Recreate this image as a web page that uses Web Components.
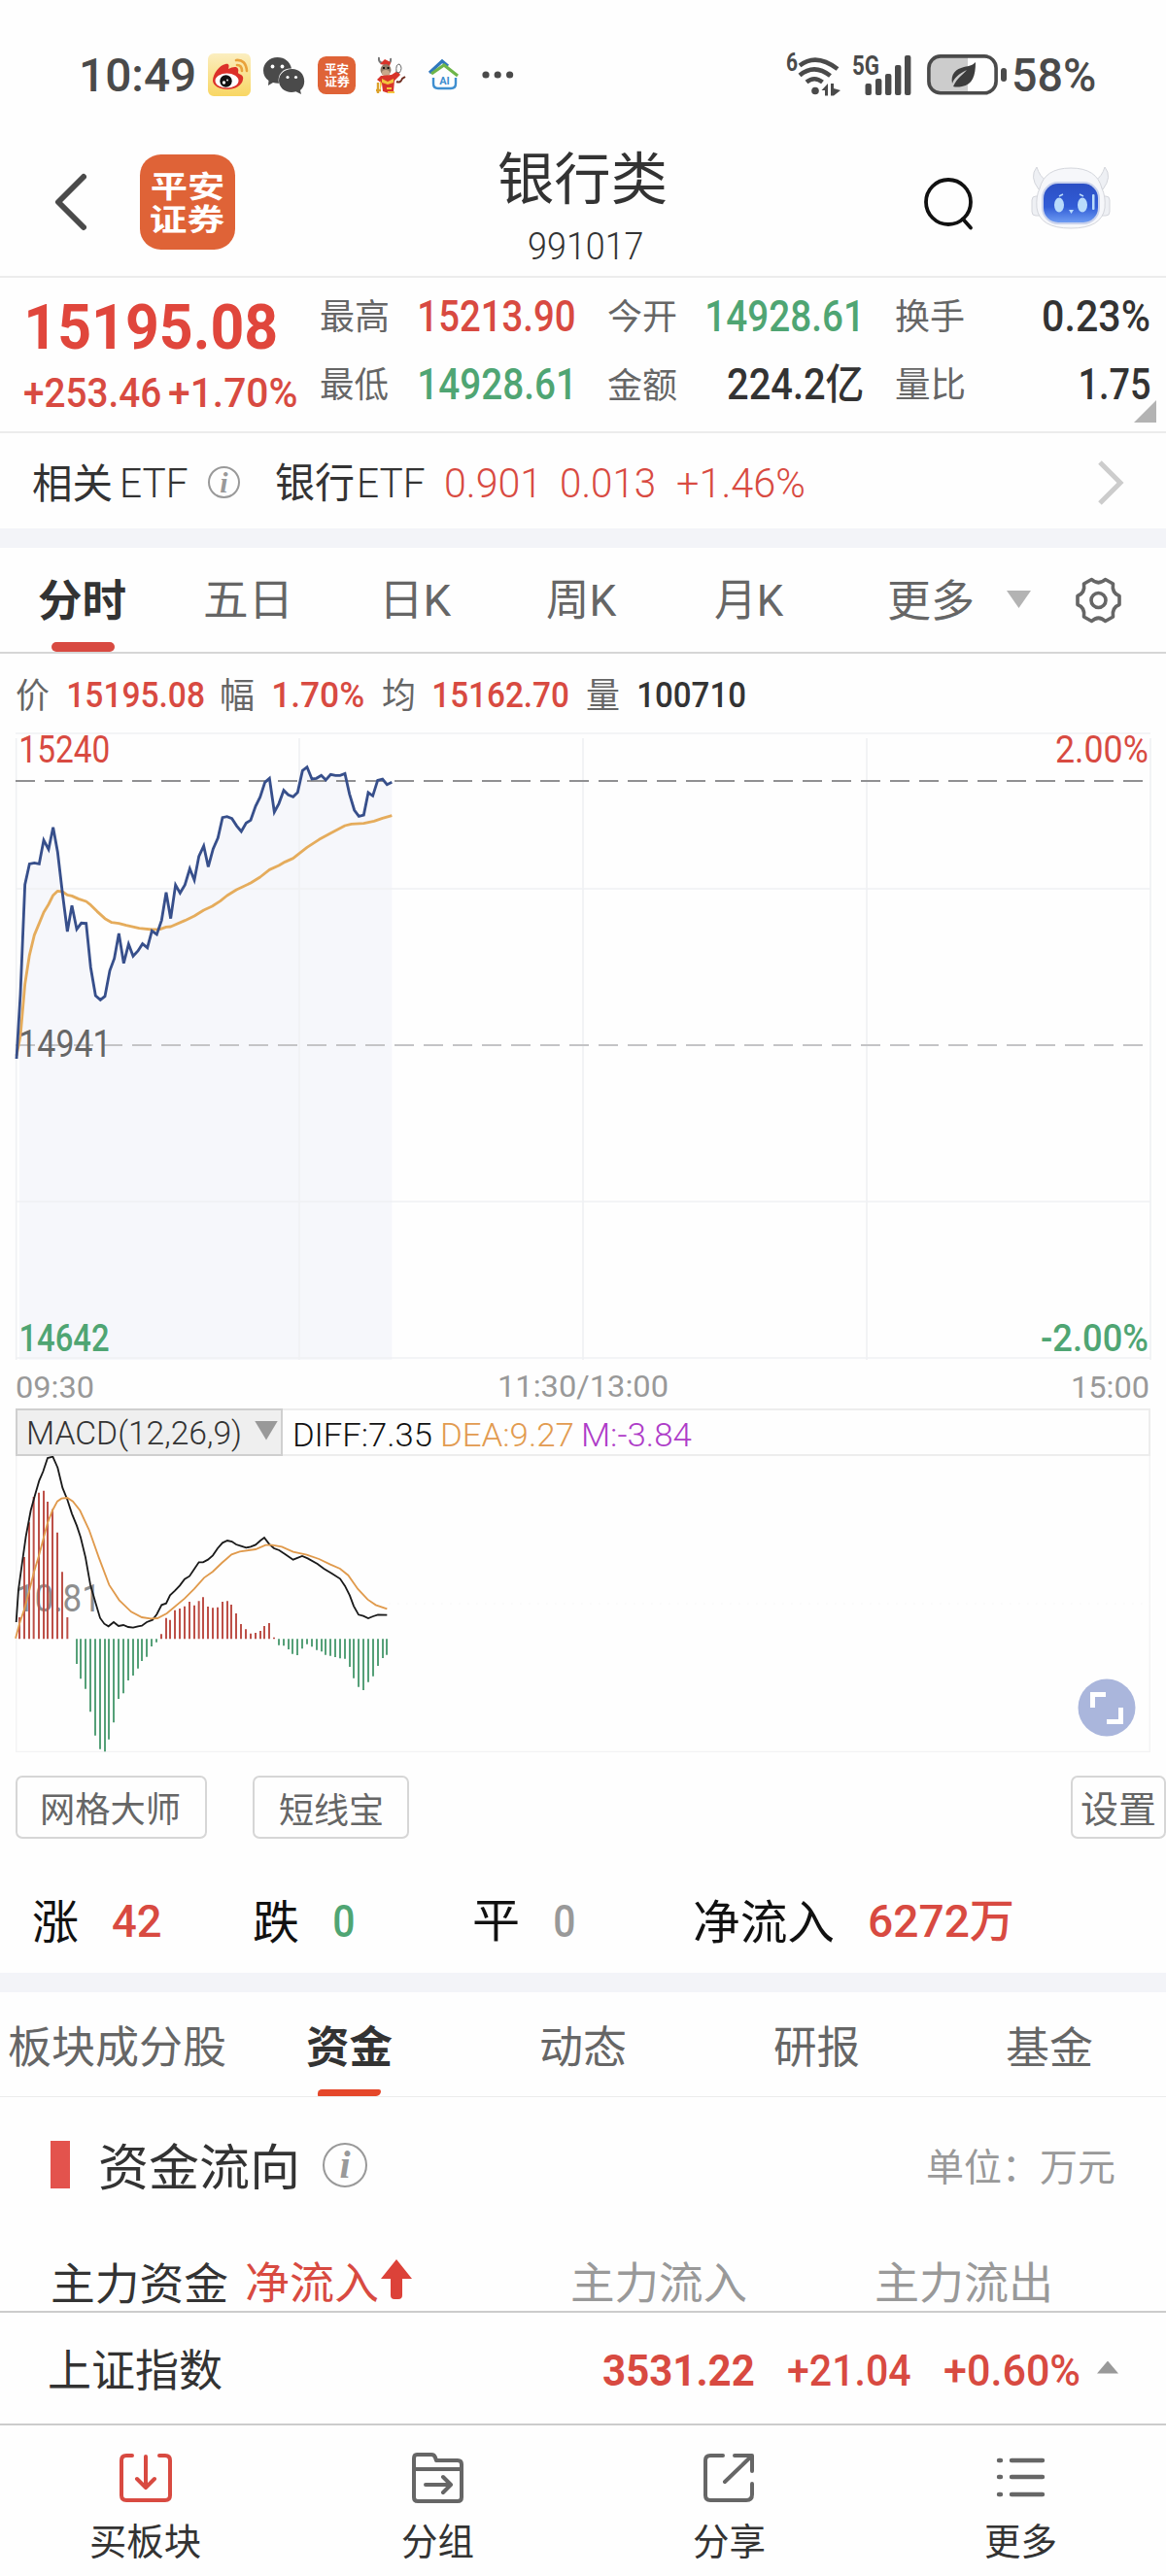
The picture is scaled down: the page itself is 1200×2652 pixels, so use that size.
<!DOCTYPE html>
<html lang="zh-CN">
<head>
<meta charset="UTF-8">
<title>银行类 991017</title>
<style>
    body {
        margin: 0;
        width: 1200px;
        background: #fefefe;
        color: #333;
        font-family: Roboto, "Noto Sans CJK SC", sans-serif;
        --red: #d84a41;
        --green: #4fa573;
        --gray: #666;
        --light: #999;
    }
</style>
</head>
<body>
    <status-bar></status-bar>
    <page-header></page-header>
    <quote-panel></quote-panel>
    <etf-row></etf-row>
    <section-gap></section-gap>
    <period-tabs></period-tabs>
    <price-info></price-info>
    <price-chart></price-chart>
    <macd-chart></macd-chart>
    <tool-buttons></tool-buttons>
    <rise-fall></rise-fall>
    <section-gap></section-gap>
    <detail-tabs></detail-tabs>
    <fund-flow></fund-flow>
    <index-row></index-row>
    <bottom-nav>
        <nav-item label="买板块" w="112">
            <svg width="54" height="54" viewBox="0 0 54 54" fill="none" stroke="#d84a41" stroke-width="4" stroke-linecap="round" stroke-linejoin="round"><path d="M13 5H7q-5 0-5 5v36q0 5 5 5h40q5 0 5-5V10q0-5-5-5h-6M27 6v32M18 29l9 9 9-9"/></svg>
        </nav-item>
        <nav-item label="分组" w="73">
            <svg width="54" height="54" viewBox="0 0 54 54" fill="none" stroke="#666" stroke-width="4" stroke-linecap="round" stroke-linejoin="round"><path d="M3 19h49M6 4h15q3 0 4 3l1 3h22q4 0 4 4v34q0 4-4 4H7q-4 0-4-4V8q0-4 3-4zM15 35h25M33 27l8 8-8 8"/></svg>
        </nav-item>
        <nav-item label="分享" w="73">
            <svg width="54" height="54" viewBox="0 0 54 54" fill="none" stroke="#666" stroke-width="4" stroke-linecap="round" stroke-linejoin="round"><path d="M21 5H8q-5 0-5 5v36q0 5 5 5h37q6 0 6-6V34M33 5h18v16M50 6L23 32"/></svg>
        </nav-item>
        <nav-item label="更多" w="72">
            <svg width="54" height="54" viewBox="0 0 54 54" fill="none" stroke="#666" stroke-width="4.4" stroke-linecap="round"><path d="M5 10h2M18 10h32M5 27h2M18 27h32M5 45h2M18 45h32"/></svg>
        </nav-item>
    </bottom-nav>

<script>
const ctx = document.createElement('canvas').getContext('2d')

function define(name, html) {
    customElements.define(name, class extends HTMLElement {
        constructor() {
            super()
            this.attachShadow({ mode: 'open' }).innerHTML = html
        }
    })
}

// text whose glyphs fill exactly the width "w"; s = font size, fw = weight
class FitText extends HTMLElement {
    constructor() {
        super()
        this.attachShadow({ mode: 'open' }).innerHTML = `
        <style>
            :host { display: block; flex: none; white-space: nowrap; line-height: 1; }
            span { display: inline-block; transform-origin: 0 0; }
        </style>
        <span><slot></slot></span>`
    }

    connectedCallback() {
        const s = Number(this.getAttribute('s'))
        const w = Number(this.getAttribute('w'))
        const fw = this.getAttribute('fw') || 400
        this.style.fontSize = s + 'px'
        this.style.fontWeight = fw
        this.style.width = w + 'px'
        this.style.height = s + 'px'

        ctx.font = `${fw} ${s}px Roboto, "Noto Sans CJK SC", sans-serif`
        const m = ctx.measureText(this.textContent)
        const k = w / (m.actualBoundingBoxLeft + m.actualBoundingBoxRight)
        const dy = (m.actualBoundingBoxAscent - m.actualBoundingBoxDescent - m.fontBoundingBoxAscent + m.fontBoundingBoxDescent) / 2
        this.shadowRoot.querySelector('span').style.transform =
            `translate(${m.actualBoundingBoxLeft * k}px, ${dy}px) scaleX(${k})`
    }
}
customElements.define('fit-text', FitText)

define('section-gap', `<style>:host { display: block; height: 20px; background: #f3f4f8; }</style>`)

define('pingan-logo', `
<style>
    :host {
        display: flex; flex: none; flex-direction: column; align-items: center; justify-content: center;
        width: var(--size); height: var(--size); border-radius: calc(var(--size) * .22);
        background: #df6337; color: #fff; gap: var(--gap, 0px);
    }
</style>
<slot></slot>`)

define('info-icon', `
<style>
    :host { display: flex; flex: none; box-sizing: border-box; align-items: center; justify-content: center;
        border: 2px solid #999; border-radius: 50%; color: #999; line-height: 1;
        font-family: "Liberation Serif", serif; font-style: italic; font-weight: 700; }
</style>
<span>i</span>`)

define('status-bar', `
<style>
    :host { display: flex; align-items: center; height: 110px; padding-top: 22px; color: #4a4a4a; }
    svg { flex: none; display: block; overflow: visible; }
</style>
<fit-text w="116" s="48" fw="500" style="margin-left:84px">10:49</fit-text>
<svg style="margin-left:14px" width="44" height="44" viewBox="0 0 44 44">
    <defs><linearGradient id="w" x2="0" y2="1"><stop stop-color="#fbeec0"/><stop offset="1" stop-color="#f8d663"/></linearGradient></defs>
    <rect width="44" height="44" rx="6" fill="url(#w)"/>
    <path d="M5 28c0-7 7-16 13-17 4-1 4 2 3 5 4-2 9-3 10 0 1 2-1 4 1 5 3 1 5 3 4 6-1 6-8 10-16 10S5 33 5 28z" fill="#dc3029"/>
    <ellipse cx="19.5" cy="28" rx="12" ry="7.6" fill="#fff"/>
    <circle cx="18.500" cy="28.500" r="6.200" fill="#111"/><circle cx="16.500" cy="30" r="1.700" fill="#fff"/><circle cx="20" cy="27.500" r=".9" fill="#fff"/>
    <path d="M29 7q10-1 11 11M30 12q5 0 5 6" fill="none" stroke="#e9a13b" stroke-width="2.600" stroke-linecap="round"/>
</svg>
<svg style="margin-left:13px" width="42" height="38" viewBox="0 0 42 38" fill="#4a4a4a">
    <path d="M14.500 1C6.500 1 0 7 0 14.500c0 4.500 2 8 5.500 10.500L5 30l5-3c2 .5 4 1 6 .8C14 18 21 12 29 12.500 27.500 5.500 22 1 14.500 1z"/>
    <path d="M29.500 14C22 14 16 19 16 26s6 12 13 12c1.500 0 3-.3 4.500-.7L39 40l-1-4c3-2.500 4.200-5.500 4.200-9.500C42 19 37 14 29.500 14z" transform="translate(0 -1)"/>
    <g fill="#fff"><circle cx="9.500" cy="10.500" r="1.900"/><circle cx="19.500" cy="10.500" r="1.900"/><circle cx="25" cy="21.500" r="1.600"/><circle cx="33.500" cy="21.500" r="1.600"/></g>
</svg>
<pingan-logo style="--size:39px;--gap:1px;margin-left:14px"><fit-text w="25" s="12" fw="700">平安</fit-text><fit-text w="26" s="12" fw="700">证券</fit-text></pingan-logo>
<svg style="margin-left:20px" width="32" height="40" viewBox="0 0 32 40">
    <path d="M4 2q-1 6 5 6M16 3q1 6-5 6" fill="none" stroke="#777" stroke-width="2"/>
    <path d="M5 9l5-5 6 3-1 4z" fill="#d8342a"/>
    <ellipse cx="11" cy="15" rx="5.500" ry="6" fill="#8f7a66"/><ellipse cx="11" cy="18" rx="4" ry="3" fill="#c9a88a"/>
    <circle cx="9" cy="13" r="1.100"/><circle cx="13.500" cy="13" r="1.100"/>
    <path d="M6 21l11-1 6-4 3 4-6 6-1 11-5 2-6-2-1-8-5-4z" fill="#d8342a"/>
    <path d="M7 24l6 3 6-3v4l-6 2-6-2zM5 26l2 3-2 8" fill="#f2c53d"/>
    <path d="M3 28v11M1 36h5" stroke="#dca12a" stroke-width="2.400"/>
    <path d="M22 17q-1-8 3-8 4 4 0 9z" fill="#fff" stroke="#666"/>
    <path d="M22 27q4 2 6-3l3-2" fill="none" stroke="#702d20" stroke-width="2"/>
    <path d="M12 34h5M13 38h7" stroke="#f2c53d" stroke-width="2"/>
</svg>
<svg style="margin-left:23px" width="31" height="32" viewBox="0 0 31 32" fill="none">
    <path d="M1 14L14 2l6 5" stroke="#2f77bd" stroke-width="3.200"/>
    <path d="M3 15L16 6l14 11" stroke="#6eb54a" stroke-width="3.200"/>
    <path d="M5 19v6q0 5 5 5h13q5 0 5-5v-6" stroke="#3f8fd0" stroke-width="2.400"/>
    <text x="16.500" y="25.500" fill="#3f8fd0" font-size="11" font-weight="700" text-anchor="middle">AI</text>
</svg>
<svg style="margin-left:24px" width="32" height="8" viewBox="0 0 32 8" fill="#4a4a4a"><circle cx="4" cy="4" r="3.600"/><circle cx="16.200" cy="4" r="3.600"/><circle cx="28.600" cy="4" r="3.600"/></svg>
<svg style="margin-left:281px" width="57" height="44" viewBox="0 0 57 44">
    <text x="0" y="18" font-size="25" font-weight="700" fill="#4a4a4a" textLength="12" lengthAdjust="spacingAndGlyphs">6</text>
    <g fill="none" stroke="#4a4a4a" stroke-width="4.600"><path d="M14 12.500Q31-1 53 16"/><path d="M14 22.500Q29 10 45.500 23"/><path d="M21 29.500Q29 23 37.500 29.500"/></g>
    <circle cx="30" cy="38.500" r="3.800" fill="#4a4a4a"/>
    <path d="M43 31v12.500h-3V38h-3.500zM46 31h3v5l7 2-7 5.500h-3z" fill="#4a4a4a"/>
</svg>
<svg style="margin-left:11px" width="61" height="44" viewBox="0 0 61 44" fill="#4a4a4a">
    <text x="0" y="22" font-size="27" font-weight="700" textLength="28" lengthAdjust="spacingAndGlyphs">5G</text>
    <rect x="13.500" y="31" width="6.400" height="12" rx="2"/><rect x="24" y="26" width="6.400" height="17" rx="2"/><rect x="34" y="21" width="6.400" height="22" rx="2"/><rect x="44" y="12" width="6.400" height="31" rx="2"/><rect x="54" y="2" width="6.400" height="41" rx="2"/>
</svg>
<svg style="margin-left:16px" width="83" height="42" viewBox="0 0 83 42">
    <path d="M42 2H14Q2 2 2 14v14q0 12 12 12h28z" fill="#ccc"/>
    <rect x="1.900" y="1.900" width="69.200" height="37.800" rx="12" fill="none" stroke="#4a4a4a" stroke-width="3.600"/>
    <rect x="76" y="14" width="6" height="14" rx="3" fill="#4a4a4a"/>
    <path d="M50 8c0 14-3 23-14 25-3 .5-6 1-9 0 4-9 10-12 14-17-8 4-13 8-15 14-2-10 4-15 12-17 6-1 9-2 12-5z" fill="#3c3c3c"/>
</svg>
<fit-text w="84" s="48" fw="500" style="margin-left:6px">58%</fit-text>`)

define('page-header', `
<style>
    :host { display: flex; align-items: center; height: 152px; border-bottom: 2px solid #ececec; }
    svg { flex: none; display: block; }
    .title { margin-left: 271px; align-self: flex-start; padding-top: 22px; display: flex; flex-direction: column; align-items: center; gap: 22px; }
</style>
<svg style="margin-left:55px" width="34" height="60" viewBox="0 0 34 60"><path d="M31 4L5 30l26 26" fill="none" stroke="#4a4a4a" stroke-width="6" stroke-linecap="round" stroke-linejoin="round"/></svg>
<pingan-logo style="--size:98px;--gap:3px;margin-left:55px"><fit-text w="74" s="31" fw="700">平安</fit-text><fit-text w="76" s="31" fw="700">证券</fit-text></pingan-logo>
<div class="title">
    <fit-text w="172" s="58">银行类</fit-text>
    <fit-text w="117" s="39" fw="300" style="margin-left:6px">991017</fit-text>
</div>
<svg style="margin-left:264px" width="56" height="60" viewBox="0 0 56 60" fill="none" stroke="#111" stroke-width="3.800" stroke-linecap="round"><circle cx="27" cy="30" r="23"/><path d="M42 47.500l8 9"/></svg>
<svg style="margin:-10px 0 0 56px" width="82" height="66" viewBox="0 0 82 66">
    <defs>
        <linearGradient id="f" x2="0" y2="1"><stop stop-color="#2c50c4"/><stop offset=".6" stop-color="#315cd6"/><stop offset="1" stop-color="#6d9bf2"/></linearGradient>
    </defs>
    <g fill="#eef0f4" stroke="#d4d6dc">
        <path d="M8 25Q-2 12 6 2q3 10 10 14zM74 25q10-13 2-23-3 10-10 14z"/>
        <rect x="1" y="32" width="12" height="20" rx="4"/><rect x="69" y="32" width="12" height="20" rx="4"/>
        <path d="M9 24Q14 3 41 3t32 21q4 8 3 20Q73 65 41 65T6 44q-1-12 3-20z" fill="#f6f7fa"/>
    </g>
    <rect x="11" y="17" width="60" height="44" rx="17" fill="#c9d2ec"/>
    <rect x="13" y="19" width="56" height="40" rx="15" fill="url(#f)"/>
    <g fill="#b9dbfb"><ellipse cx="29" cy="41" rx="5" ry="7.500"/><ellipse cx="53" cy="41" rx="5" ry="7.500"/><path d="M39 46h5l-2.500 4z"/><rect x="63" y="30" width="2.500" height="16" rx="1"/></g>
    <path d="M29 32l4-2M50 30l4 2" stroke="#b9dbfb" stroke-width="1.500"/>
</svg>`)

define('quote-panel', `
<style>
    :host { display: flex; position: relative; box-sizing: border-box; height: 160px; border-bottom: 2px solid #ececec; }
    .last { width: 305px; padding: 18px 0 0 25px; color: #e0463c; box-sizing: border-box; }
    .change { display: flex; gap: 9px; margin-top: 14px; }
    .grid { display: grid; margin-left: 25px; padding-top: 4px; align-items: center;
        grid-template-columns: 102px 194px 100px 196px 70px 191px; grid-template-rows: 70px 70px; }
    .grid fit-text { justify-self: start; }
    .grid .end { justify-self: end; }
    .label { color: var(--gray); }
    .up { color: var(--red); }
    .down { color: var(--green); }
    .corner { position: absolute; right: 10px; bottom: 9px; width: 23px; height: 23px; background: #b3b3b3; clip-path: polygon(100% 0, 100% 100%, 0 100%); }
</style>
<div class="last">
    <fit-text w="255" s="65" fw="700" style="margin-left:4px">15195.08</fit-text>
    <div class="change up"><fit-text w="140" s="43" fw="500">+253.46</fit-text><fit-text w="131" s="43" fw="500">+1.70%</fit-text></div>
</div>
<div class="grid">
    <fit-text class="label" w="69" s="36">最高</fit-text><fit-text class="up" w="159" s="43.500" fw="500">15213.90</fit-text>
    <fit-text class="label" w="70" s="36">今开</fit-text><fit-text class="down end" w="155" s="43.500" fw="500" style="margin-right:39px">14928.61</fit-text>
    <fit-text class="label" w="70" s="36">换手</fit-text><fit-text class="end" w="109" s="43.500" fw="500">0.23%</fit-text>
    <fit-text class="label" w="69" s="36">最低</fit-text><fit-text class="down" w="155" s="43.500" fw="500">14928.61</fit-text>
    <fit-text class="label" w="70" s="36">金额</fit-text><fit-text class="end" w="139" s="43.500" fw="500" style="margin-right:34px">224.2亿</fit-text>
    <fit-text class="label" w="70" s="36">量比</fit-text><fit-text class="end" w="71" s="43.500" fw="500">1.75</fit-text>
</div>
<div class="corner"></div>`)

define('etf-row', `
<style>
    :host { display: flex; align-items: center; height: 95px; padding-top: 3px; }
    info-icon { width: 33px; height: 33px; margin-left: 21px; font-size: 30px; }
    .up { color: var(--red); }
</style>
<fit-text w="81" s="42" style="margin-left:34px">相关</fit-text>
<fit-text w="67" s="42" fw="300" style="margin-left:11px">ETF</fit-text>
<info-icon></info-icon>
<fit-text w="80" s="42" style="margin-left:37px">银行</fit-text>
<fit-text w="67" s="42" fw="300" style="margin-left:6px">ETF</fit-text>
<fit-text class="up" w="91" s="42" fw="300" style="margin-left:22px">0.901</fit-text>
<fit-text class="up" w="95" s="42" fw="300" style="margin-left:28px">0.013</fit-text>
<fit-text class="up" w="130" s="42" fw="300" style="margin-left:24px">+1.46%</fit-text>
<svg style="margin-left:302px" width="28" height="48" viewBox="0 0 28 48"><path d="M3 3l21 21L3 45" fill="none" stroke="#ccc" stroke-width="5"/></svg>`)

define('period-tabs', `
<style>
    :host { display: flex; position: relative; align-items: center; height: 107px; border-bottom: 2px solid #d6d6d6; color: var(--gray); }
    .on { color: #333; }
    i { position: absolute; left: 53px; bottom: 0; width: 65px; height: 10px; border-radius: 5px; background: var(--red); }
    .drop { width: 25px; height: 18px; margin: -1px 0 0 35px; background: #b3b3b3; clip-path: polygon(0 0, 100% 0, 50% 100%); }
</style>
<fit-text class="on" w="89" s="45" fw="700" style="margin-left:40px">分时</fit-text>
<fit-text w="84" s="45" style="margin-left:82px">五日</fit-text>
<fit-text w="68" s="45" style="margin-left:102px">日K</fit-text>
<fit-text w="72" s="45" style="margin-left:98px">周K</fit-text>
<fit-text w="71" s="45" style="margin-left:101px">月K</fit-text>
<fit-text w="86" s="45" style="margin-left:108px">更多</fit-text>
<div class="drop"></div>
<svg style="margin-left:46px" width="47" height="48" viewBox="0 0 47 48" fill="none" stroke="#666" stroke-width="3.600" stroke-linejoin="round">
    <path d="M16.500 2.500Q23.500 9 30.500 2.500L38.500 7Q37 16.500 45 19.500v9Q37 31.500 38.500 41l-8 4.500Q23.500 39 16.500 45.500L8.500 41Q10 31.500 2 28.500v-9Q10 16.500 8.500 7z"/>
    <circle cx="23.500" cy="24" r="7.500"/>
</svg>
<i></i>`)

define('price-info', `
<style>
    :host { display: flex; align-items: center; height: 79px; padding-top: 2px; color: var(--red); }
    .label { color: var(--gray); }
</style>
<fit-text class="label" w="33" s="36" style="margin-left:17px">价</fit-text>
<fit-text w="139" s="37" fw="500" style="margin-left:21px">15195.08</fit-text>
<fit-text class="label" w="33" s="36" style="margin-left:18px">幅</fit-text>
<fit-text w="92" s="37" fw="500" style="margin-left:21px">1.70%</fit-text>
<fit-text class="label" w="32" s="36" style="margin-left:20px">均</fit-text>
<fit-text w="138" s="37" fw="500" style="margin-left:21px">15162.70</fit-text>
<fit-text class="label" w="33" s="36" style="margin-left:19px">量</fit-text>
<fit-text w="109" s="37" fw="500" style="margin-left:21px;color:#333">100710</fit-text>`)

// plot coordinates below are in thirds of a pixel
const price = '51,1050 63,850 77,512 91,448 106,445 121,448 135,375 150,403 164,335 178,412 193,540 208,657 222,577 237,650 251,631 266,632 280,768 295,855 310,868 324,857 339,778 353,740 367,663 382,755 397,696 411,733 426,717 440,695 455,707 469,655 484,666 499,622 513,536 527,617 542,513 556,538 571,513 586,463 600,498 614,425 629,393 643,457 658,402 673,368 687,305 701,302 716,308 731,331 745,348 760,322 774,313 789,270 803,242 818,196 832,184 847,288 861,262 876,221 890,235 905,241 919,227 934,160 948,149 963,186 977,184 992,175 1006,189 1021,172 1036,175 1050,175 1065,169 1079,232 1094,282 1108,301 1123,297 1137,228 1151,238 1166,190 1181,186 1195,203 1210,196'
const average = '51,1040 63,980 77,820 91,730 106,668 121,632 135,598 150,573 164,545 178,532 193,534 208,544 222,547 242,556 266,564 280,575 300,595 324,617 345,629 367,632 390,638 430,647 469,651 494,650 513,643 527,642 571,623 600,609 629,591 655,579 680,563 701,546 730,528 774,507 803,489 832,466 861,453 880,442 905,431 925,415 948,397 985,373 1021,353 1065,330 1085,325 1123,323 1155,316 1181,307 1210,299'

define('price-chart', `
<style>
    :host { display: block; position: relative; }
    svg { display: block; }
    .plot fit-text { position: absolute; }
    .up { color: var(--red); top: -2px; }
    .down { color: var(--green); bottom: 9.500px; }
    .times { display: flex; align-items: center; justify-content: space-between; height: 45px; padding: 0 18px 0 17px; color: var(--light); }
    .plot { position: relative; height: 651px; }
</style>
<div class="plot">
    <svg width="1200" height="651" viewBox="0 42 3600 1953" fill="none">
        <polygon points="60,1980 60,900 ${price} 1210,1980" fill="#f6f7fb"/>
        <path d="M48 45H3552M48 525H3552M48 1491H3552M48 1974H3552" stroke="#f0f1f3" stroke-width="5"/>
        <path d="M50 60V1980M924 60V1980M1800 60V1980M2676 60V1980M3552 60V1980" stroke="#f0f1f3" stroke-width="5"/>
        <path d="M48 192H3552" stroke="#909092" stroke-width="6" stroke-dasharray="60 30"/>
        <path d="M48 1008H3552" stroke="#c4c4c6" stroke-width="6" stroke-dasharray="60 30"/>
        <polyline points="${average}" stroke="#e5ac5c" stroke-width="8.500" stroke-linejoin="round"/>
        <polyline points="${price}" stroke="#374f8b" stroke-width="8.500"/>
    </svg>
    <fit-text class="up" w="90" s="38" style="left:22px">15240</fit-text>
    <fit-text class="up" w="94" s="38" style="right:19px">2.00%</fit-text>
    <fit-text w="86" s="38" style="left:22px;top:300.500px;color:#666">14941</fit-text>
    <fit-text class="down" w="90" s="38" fw="500" style="left:22px">14642</fit-text>
    <fit-text class="down" w="109" s="38" fw="500" style="right:19px">-2.00%</fit-text>
</div>
<div class="times">
    <fit-text w="79" s="32">09:30</fit-text>
    <fit-text w="173" s="32" style="margin-left:1px">11:30/13:00</fit-text>
    <fit-text w="78" s="32">15:00</fit-text>
</div>`)

const redBars = [[60,975],[75,789],[90,682],[104,603],[120,590],[135,584],[147,618],[162,641],[177,713],[192,835],[208,975],
    [498,1027],[513,977],[525,983],[540,953],[555,948],[570,941],[585,927],[600,938],[614,925],[627,913],[642,942],[657,946],[672,944],[687,927],[702,925],[714,936],[729,963],[744,996],[759,1012],[774,1025],[789,1023],[804,1017],[816,1002],[831,993],[846,1037]]
const greenBars = [[237,1119],[249,1165],[264,1196],[279,1267],[294,1340],[309,1382],[324,1390],[336,1352],[351,1300],[366,1227],[381,1210],[396,1170],[411,1155],[426,1133],[438,1110],[453,1097],[468,1065],[483,1052],
    [861,1061],[876,1063],[891,1074],[903,1088],[918,1092],[933,1072],[948,1058],[963,1066],[978,1076],[993,1081],[1005,1091],[1020,1094],[1035,1098],[1050,1102],[1065,1103],[1080,1128],[1092,1163],[1107,1190],[1122,1200],[1137,1175],[1152,1157],[1167,1125],[1182,1101],[1194,1091]]
const bars = list => list.map(([x, y]) => `M${x} 1042V${y}`).join('')

define('macd-chart', `
<style>
    :host { display: block; position: relative; height: 355px; }
    .head { display: flex; align-items: center; box-sizing: border-box; height: 49px; margin: 0 16px; border: 2px solid #ededed; border-left: 0; }
    .head fit-text { padding-top: 5px; }
    .pick { display: flex; flex: none; align-items: center; box-sizing: border-box; width: 275px; height: 49px; padding-left: 12px; background: #efefef; border: 2px solid #cfcfcf; }
    .pick i { width: 24px; height: 20px; margin: -4px 0 0 15px; background: #999; clip-path: polygon(0 0, 100% 0, 50% 100%); }
    svg { display: block; }
    .value { position: absolute; left: 19px; top: 176px; color: #8e8e8e; }
    .plot { position: absolute; left: 0; top: 49px; }
    .expand { position: absolute; left: 1109px; top: 278px; }
</style>
<div class="head">
    <div class="pick"><fit-text w="217" s="34" fw="300">MACD(12,26,9)</fit-text><i></i></div>
    <fit-text w="140" s="34" fw="300" style="margin-left:13px;color:#111">DIFF:7.35</fit-text>
    <fit-text w="134" s="34" fw="300" style="margin-left:12px;color:#e29b50">DEA:9.27</fit-text>
    <fit-text w="111" s="34" fw="300" style="margin-left:11px;color:#ae3cc8">M:-3.84</fit-text>
</div>
<fit-text class="value" w="78" s="38">10.81</fit-text>
<svg class="plot" width="1200" height="306" viewBox="0 477 3600 918" fill="none">
    <path d="M50 477V1390H3550V477" stroke="#f3f3f4" stroke-width="4"/>
    <path d="M1200 933H3550" stroke="#f6f6f6" stroke-width="3" stroke-dasharray="5 22"/>
    <path d="${bars(redBars)}" stroke="#bd5048" stroke-width="6"/>
    <path d="${bars(greenBars)}" stroke="#55a078" stroke-width="6"/>
    <polyline points="50,990 57,890 68,810 80,725 95,645 108,598 121,553 133,525 147,483 163,479 178,513 193,575 208,612 222,655 237,692 249,728 264,790 279,875 295,930 309,977 322,995 335,1003 351,990 366,1002 381,999 396,1005 411,1007 426,1003 438,1001 453,990 471,983 484,966 499,937 513,932 525,907 540,893 555,877 570,857 585,848 600,826 614,805 627,805 642,797 657,784 672,762 687,745 702,738 716,741 729,750 744,755 760,760 774,757 789,751 804,738 816,729 831,749 846,762 862,768 880,780 905,797 933,786 950,793 980,810 1000,825 1025,840 1050,856 1065,878 1080,908 1092,940 1107,967 1122,971 1137,978 1152,972 1167,967 1195,968" stroke="#1a1a1a" stroke-width="5.500"/>
    <polyline points="48,1040 60,995 75,950 90,895 105,835 120,785 135,728 147,683 162,645 177,617 190,608 208,606 225,617 247,645 275,705 305,790 337,875 368,922 405,958 438,975 465,979 486,978 515,963 570,917 600,887 630,853 657,834 685,807 715,781 740,772 789,765 820,752 840,752 870,757 905,773 947,782 985,795 1020,812 1050,825 1075,845 1105,888 1135,920 1160,937 1195,949" stroke="#e09a4c" stroke-width="5.500"/>
</svg>
<svg class="expand" width="60" height="60" viewBox="0 0 60 60"><circle cx="30" cy="30" r="29.500" fill="#aab6dc"/><path d="M15.500 30V16.500H29M30 44.500h14.500V30" fill="none" stroke="#fff" stroke-width="5"/></svg>`)

define('tool-buttons', `
<style>
    :host { display: flex; padding: 23px 0 0 16px; color: var(--gray); }
    div { display: flex; align-items: center; justify-content: center; box-sizing: border-box; height: 65px; border: 2px solid #d6d6d6; border-radius: 7px; padding-top: 3px; }
</style>
<div style="width:197px"><fit-text w="141" s="36">网格大师</fit-text></div>
<div style="width:161px;margin-left:47px"><fit-text w="105" s="36">短线宝</fit-text></div>
<div style="width:98px;margin-left:auto;padding-right:1px"><fit-text w="75" s="38">设置</fit-text></div>`)

define('rise-fall', `
<style>
    :host { display: flex; align-items: center; box-sizing: border-box; height: 138px; padding-top: 31px; color: #111; }
</style>
<fit-text w="46" s="48" style="margin-left:34px">涨</fit-text>
<fit-text w="49" s="47" fw="500" style="margin-left:36px;color:var(--red)">42</fit-text>
<fit-text w="46" s="48" style="margin-left:96px">跌</fit-text>
<fit-text w="20" s="47" fw="500" style="margin-left:37px;color:var(--green)">0</fit-text>
<fit-text w="45" s="48" style="margin-left:124px">平</fit-text>
<fit-text w="20" s="47" fw="500" style="margin-left:38px;color:var(--light)">0</fit-text>
<fit-text w="143" s="48" style="margin-left:124px">净流入</fit-text>
<fit-text w="147" s="47" fw="500" style="margin-left:37px;color:var(--red)">6272万</fit-text>`)

define('detail-tabs', `
<style>
    :host { display: grid; grid-template-columns: repeat(5, 240px); align-items: center; justify-items: center; position: relative;
        box-sizing: border-box; height: 108px; padding-top: 3px; border-bottom: 1px solid #ececec; color: var(--gray); }
    .on { color: #333; }
    i { position: absolute; left: 327px; bottom: 0; width: 65px; height: 7px; border-radius: 6px 3px 7px 1px; background: #e5472a; }
</style>
<fit-text w="223" s="45">板块成分股</fit-text>
<fit-text class="on" w="88" s="45" fw="700">资金</fit-text>
<fit-text w="87" s="45">动态</fit-text>
<fit-text w="87" s="45">研报</fit-text>
<fit-text w="88" s="45">基金</fit-text>
<i></i>`)

define('fund-flow', `
<style>
    :host { display: block; }
    .title { display: flex; align-items: center; height: 142px; }
    .title b { width: 20px; height: 49px; margin: -3px 0 0 52px; background: #e3534d; }
    info-icon { width: 46px; height: 46px; margin: -2px 0 0 27px; font-size: 40px; }
    .cols { display: flex; align-items: center; box-sizing: border-box; height: 80px; padding-top: 18px; border-bottom: 2px solid #ccc; color: var(--light); }
</style>
<div class="title">
    <b></b>
    <fit-text w="202" s="51" style="margin-left:31px">资金流向</fit-text>
    <info-icon></info-icon>
    <fit-text w="192" s="39" style="margin:0 53px 0 auto;color:var(--light)">单位：万元</fit-text>
</div>
<div class="cols">
    <fit-text w="180" s="45" style="margin-left:54px;color:#333">主力资金</fit-text>
    <fit-text w="135" s="45" style="margin-left:20px;color:var(--red)">净流入</fit-text>
    <svg style="margin:-5px 0 0 3px" width="32" height="42" viewBox="0 0 32 42" fill="#dc4239"><path d="M16 0l16 20H22v17q0 4-4 4h-4q-4 0-4-4V20H0z"/></svg>
    <fit-text w="179" s="45" style="margin-left:165px">主力流入</fit-text>
    <fit-text w="178" s="45" style="margin-left:134px">主力流出</fit-text>
</div>`)

define('index-row', `
<style>
    :host { display: flex; align-items: center; box-sizing: border-box; height: 116px; padding-top: 3px; border-bottom: 2px solid #ccc; color: var(--red); }
    i { width: 22px; height: 13px; margin: -5px 0 0 18px; background: #999; clip-path: polygon(50% 0, 100% 100%, 0 100%); }
</style>
<fit-text w="177" s="45" style="margin-left:51px;color:#333">上证指数</fit-text>
<fit-text w="155" s="45" fw="700" style="margin-left:393px">3531.22</fit-text>
<fit-text w="126" s="45" fw="500" style="margin-left:35px">+21.04</fit-text>
<fit-text w="139" s="45" fw="500" style="margin-left:35px">+0.60%</fit-text>
<i></i>`)

class NavItem extends HTMLElement {
    constructor() {
        super()
        this.attachShadow({ mode: 'open' }).innerHTML = `
        <style>
            :host { display: flex; flex-direction: column; align-items: center; gap: 20px; padding-top: 26px; }
            ::slotted(svg) { display: block; }
        </style>
        <slot></slot>
        <fit-text w="${this.getAttribute('w')}" s="38">${this.getAttribute('label')}</fit-text>`
    }
}
customElements.define('nav-item', NavItem)

define('bottom-nav', `
<style>
    :host { display: grid; grid-template-columns: repeat(4, 1fr); height: 155px; }
</style>
<slot></slot>`)
</script>
</body>
</html>
